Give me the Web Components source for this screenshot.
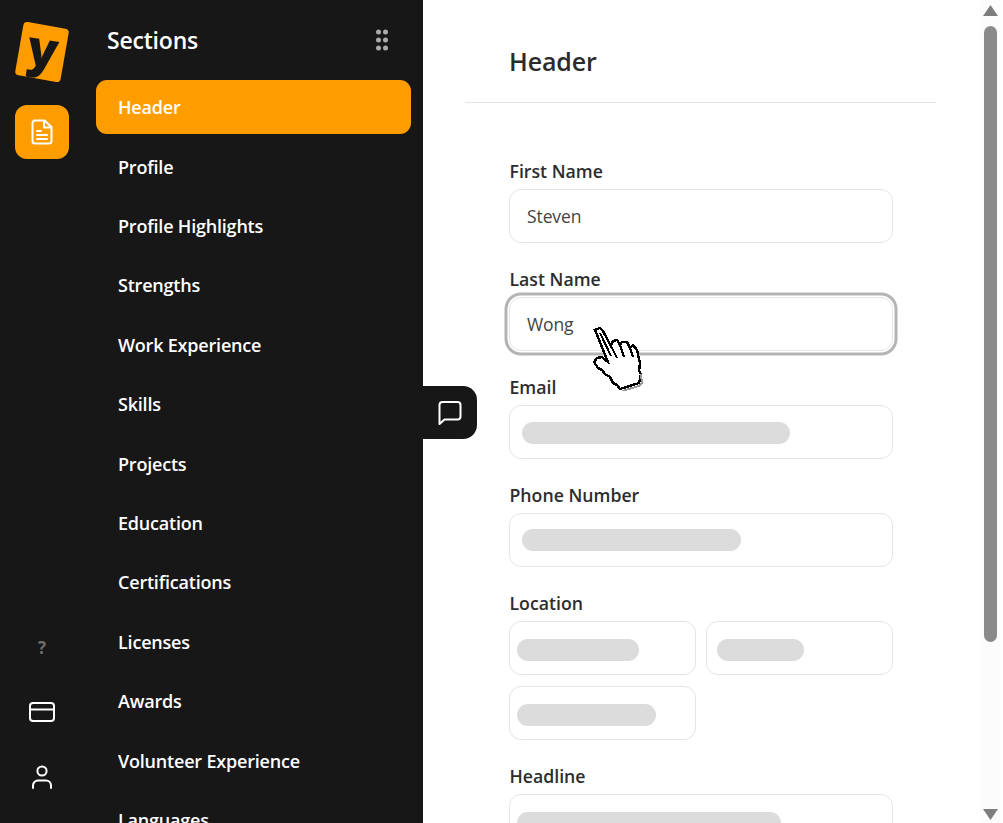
<!doctype html>
<html><head><meta charset="utf-8">
<style>
html,body{margin:0;height:100%;overflow:hidden;background:#fff;font-family:"Open Sans","Noto Sans",sans-serif}
app-shell{height:823px}
</style></head><body>
<app-shell>
  <icon-rail slot="rail"></icon-rail>
  <section-nav slot="nav">
    <nav-item active>Header</nav-item><nav-item>Profile</nav-item><nav-item>Profile Highlights</nav-item><nav-item>Strengths</nav-item><nav-item>Work Experience</nav-item><nav-item>Skills</nav-item><nav-item>Projects</nav-item><nav-item>Education</nav-item><nav-item>Certifications</nav-item><nav-item>Licenses</nav-item><nav-item>Awards</nav-item><nav-item>Volunteer Experience</nav-item><nav-item>Languages</nav-item>
  </section-nav>
  <editor-pane slot="main">
    <form-field label="First Name"><text-box>Steven</text-box></form-field>
    <form-field label="Last Name"><text-box focused>Wong</text-box></form-field>
    <form-field label="Email"><text-box><blur-bar style="width:268px;margin:2px 0 0 -5px"></blur-bar></text-box></form-field>
    <form-field label="Phone Number"><text-box><blur-bar style="width:219px;margin-left:-5px"></blur-bar></text-box></form-field>
    <form-field label="Location" grid>
      <text-box tight><blur-bar style="width:122px;margin-top:3px"></blur-bar></text-box>
      <text-box tight><blur-bar style="width:87px;margin:3px 0 0 3px"></blur-bar></text-box>
      <text-box tight><blur-bar style="width:139px;margin-top:3px"></blur-bar></text-box>
    </form-field>
    <form-field label="Headline"><text-box tight><blur-bar style="width:264px;margin-top:3px"></blur-bar></text-box></form-field>
  </editor-pane>
  <fake-scrollbar slot="bar"></fake-scrollbar>
</app-shell>
<script>
function def(name, html){
  customElements.define(name, class extends HTMLElement{
    constructor(){super();this.attachShadow({mode:'open'}).innerHTML=typeof html==='function'?html(this):html;}
  });
}
def('app-shell',`<style>
:host{display:flex;width:1003px;position:relative;overflow:hidden}
.dark{display:flex;width:423px;background:#171717;flex:none}
.main{flex:1;min-width:0;overflow:hidden}
.chat{position:absolute;left:423px;top:386px;width:54px;height:53px;background:#171717;border-radius:0 14px 14px 0;display:flex;align-items:center;justify-content:center}
.hand{position:absolute;left:592px;top:325px;width:52px;height:66px}
</style>
<div class="dark"><slot name="rail"></slot><slot name="nav"></slot></div>
<div class="main"><slot name="main"></slot></div>
<slot name="bar"></slot>
<div class="chat"><svg width="26" height="26" viewBox="0 0 26 26" fill="none" stroke="#fff" stroke-width="2" stroke-linejoin="round"><path d="M2.500 24V5a3 3 0 0 1 3-3h15a3 3 0 0 1 3 3v11.500a3 3 0 0 1-3 3H7.500z"/></svg></div>
<svg class="hand" viewBox="0 0 52 66" shape-rendering="crispEdges">
<path d="M3 5 L8 3 L11 6 L19 21 L21 16 L25 15 L28 20 L30 17 L35 17 L38 23 L41 20 L45 25 L48 38 L47 46 L49 49 L47 58 L28 64 L25 60 L21 58 L18 52 L13 49 L10 45 L6 43 L2 37 L5 33 L10 32 L13 35 L16 37 Z" fill="#fff" stroke="#000" stroke-width="2.400" stroke-linejoin="miter"/>
<path d="M8 8 L19 31 M19 21 L25 33 M28 20 L32 32 M38 23 L41 32" fill="none" stroke="#000" stroke-width="2"/>
<path d="M49 49 L50 58 L47 61 L30 66" fill="none" stroke="#999" stroke-width="2"/>
</svg>`);

def('icon-rail',`<style>
:host{display:flex;flex-direction:column;align-items:center;width:84px;height:823px;padding:25px 0 0 0;box-sizing:border-box}
.logo{width:46px;height:54px;margin:0 1px 26px 0;background:#ff9d00;border-radius:4px;transform:rotate(10deg);display:flex;align-items:center;justify-content:center;flex:none}
.y{font:800 50px/50px "Open Sans",sans-serif;color:#171717;margin-top:-8px;transform:rotate(-1deg)}
.doc{width:54px;height:54px;background:#ff9d00;border-radius:12px;display:flex;align-items:center;justify-content:center}
.sp{flex:1}
.q{font:700 17px/20px "Open Sans",sans-serif;color:#6f6f6f;margin-bottom:44px}
.card{margin-bottom:42px;display:block}
.user{margin-bottom:33px;display:block}
</style>
<div class="logo"><span class="y">y</span></div>
<div class="doc"><svg width="24" height="26" viewBox="0 0 24 26" fill="none" stroke="#fff" stroke-width="2" stroke-linecap="round" stroke-linejoin="round"><path d="M4 1.500h10.500L21.500 8v14a2.500 2.500 0 0 1-2.500 2.500H5A2.500 2.500 0 0 1 2.500 22V4A2.500 2.500 0 0 1 5 1.500z"/><path d="M14 2v6.500h7M7 12h4M7 16h10M7 20h10"/></svg></div>
<div class="sp"></div>
<div class="q">?</div>
<svg class="card" width="26" height="20" viewBox="0 0 26 20" fill="none" stroke="#fff" stroke-width="2"><rect x="1" y="1" width="24" height="18" rx="3"/><path d="M1 7.500h24"/></svg>
<svg class="user" width="22" height="26" viewBox="0 0 22 26" fill="none" stroke="#fff" stroke-width="2" stroke-linecap="round"><circle cx="11" cy="7" r="4.600"/><path d="M2 24v-2.500a5 5 0 0 1 5-5h8a5 5 0 0 1 5 5V24"/></svg>`);

def('section-nav',`<style>
:host{display:block;flex:1;min-width:0;padding:0 12px 0 12px;box-sizing:border-box;overflow:hidden;height:823px}
.top{display:flex;align-items:center;justify-content:space-between;height:80.300px;padding:0 22px 0 11px}
h2{margin:0;font:600 23px/30px "Open Sans",sans-serif;color:#fff;letter-spacing:-.2px}
.list{display:flex;flex-direction:column;gap:5.400px}
</style>
<div class="top"><h2>Sections</h2><svg width="14" height="24" viewBox="0 0 14 24" fill="#aaa"><circle cx="3.500" cy="4" r="2.500"/><circle cx="10.500" cy="4" r="2.500"/><circle cx="3.500" cy="12" r="2.500"/><circle cx="10.500" cy="12" r="2.500"/><circle cx="3.500" cy="20" r="2.500"/><circle cx="10.500" cy="20" r="2.500"/></svg></div>
<div class="list"><slot></slot></div>`);

def('nav-item',`<style>
:host{display:flex;align-items:center;height:54px;padding:0 22px;border-radius:11px;color:#fff;font:600 18px/24px "Open Sans",sans-serif;letter-spacing:-.2px;flex:none;white-space:nowrap}
:host([active]){background:#ff9d00}
</style><slot></slot>`);

def('editor-pane',`<style>
:host{display:block;height:823px;overflow:hidden;padding:0 90px 0 42px;box-sizing:border-box;width:560px}
h1{margin:0;font:600 25px/34px "Open Sans",sans-serif;color:#2b2b2b;letter-spacing:-.15px;padding:44px 0 24px 44px;height:34px;box-sizing:content-box}
.rule{height:1px;background:#e4e4e4;width:471px;margin-bottom:55px}
.fields{padding-left:44px;width:384px;display:flex;flex-direction:column;gap:23px}
</style>
<h1>Header</h1><div class="rule"></div><div class="fields"><slot></slot></div>`);

def('form-field',el=>`<style>
:host{display:block}
label{display:block;font:600 17.700px/26px "Open Sans",sans-serif;color:#2d2d2d;letter-spacing:0;height:26px;margin-bottom:5px;padding-left:.5px}
.wrap{display:grid;grid-template-columns:187px 187px;gap:11px 10px}
:host(:not([grid])) .wrap{display:block}
</style><label>${el.getAttribute('label')}</label><div class="wrap"><slot></slot></div>`);

def('text-box',`<style>
:host{display:flex;align-items:center;height:54px;box-sizing:border-box;border:1px solid #e5e5e5;border-radius:12px;padding:0 17px;font:400 17.500px/24px "Open Sans",sans-serif;color:#444;letter-spacing:-.1px;background:#fff}
:host([tight]){padding:0 7px}
:host([focused]){box-shadow:0 0 0 1.500px #fff,0 0 0 4.500px #b4b4b4}
</style><slot></slot>`);

def('blur-bar',`<style>:host{display:block;height:22px;border-radius:11px;background:#dcdcdc}</style>`);

def('fake-scrollbar',`<style>
:host{display:flex;flex-direction:column;align-items:center;width:21px;height:823px;flex:none;background:#fcfcfc;box-sizing:border-box;position:absolute;right:2px;top:0;padding-top:5px}
.thumb{width:13px;height:616px;border-radius:7px;background:#8a8a8a;margin-top:10px}
.sp{flex:1}
.down{margin-bottom:3px}
</style>
<svg width="15" height="11" viewBox="0 0 15 11"><path d="M7.500 0L15 11H0z" fill="#7d7d7d"/></svg>
<div class="thumb"></div><div class="sp"></div>
<svg class="down" width="15" height="11" viewBox="0 0 15 11"><path d="M0 0h15L7.500 11z" fill="#7d7d7d"/></svg>`);
</script>
</body></html>
